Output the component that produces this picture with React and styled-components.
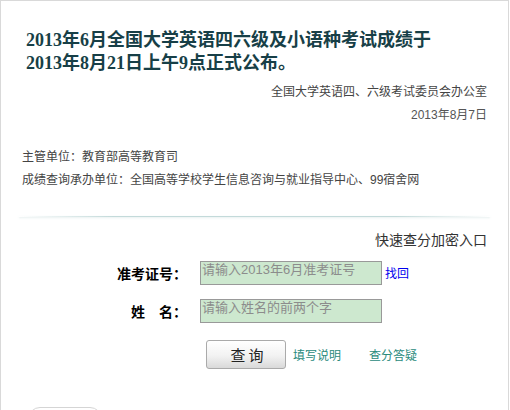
import styled, { createGlobalStyle } from 'styled-components';

const GlobalStyle = createGlobalStyle`
	html, body {
		margin: 0;
		padding: 0;
		background: #fff;
	}

	body {
		font-family: 'Liberation Sans', 'Noto Sans CJK SC', sans-serif;
	}
`;

const Page = styled.div`
	box-sizing: border-box;
	width: 509px;
	height: 410px;
	border: 1px solid #d9d9d9;
	border-bottom: none;
	overflow: hidden;
`;

const Header = styled.div`
	padding: 28px 21px 0 25px;
`;

const Title = styled.h1`
	margin: 0;
	font-family: 'Liberation Serif', 'Noto Sans CJK SC', serif;
	font-size: 18px;
	font-weight: bold;
	line-height: 23px;
	color: #173f47;
`;

const TitleLine = styled.div`
	height: 23px;
`;

const Signature = styled.div`
	height: 23px;
	margin-top: ${({ $first }) => ($first ? '6px' : '0')};
	text-align: right;
	font-size: 12px;
	line-height: 23px;
	color: ${({ $first }) => ($first ? '#444' : '#555')};
`;

const Info = styled.div`
	padding: 19px 0 0 21px;
	font-size: 12px;
	line-height: 23px;
	color: #444;
`;

const InfoLine = styled.div`
	height: 23px;
`;

const Divider = styled.div`
	height: 1px;
	margin: 24px 18px 0 18px;
	background: linear-gradient(
		to right,
		rgba(190, 215, 215, 0),
		#c3dada 20%,
		#c3dada 80%,
		rgba(190, 215, 215, 0)
	);
	box-shadow: 0 1px 2px rgba(200, 220, 220, 0.6);
`;

const QuickEntry = styled.div`
	height: 20px;
	margin: 13px 21px 0 0;
	text-align: right;
	font-size: 14px;
	line-height: 20px;
	color: #333;
`;

const Form = styled.div`
	display: flex;
	flex-direction: column;
	gap: 14px;
	margin-top: 11px;
`;

const Row = styled.div`
	display: flex;
	align-items: center;
	height: 24px;
`;

const Label = styled.label`
	box-sizing: border-box;
	width: 186px;
	text-align: right;
	font-size: 14px;
	font-weight: bold;
	color: #000;
	white-space: pre;
`;

const Field = styled.input`
	box-sizing: border-box;
	width: 182px;
	height: 24px;
	margin-left: 13px;
	padding: 0 0 7px 1px;
	border: 1px solid #999;
	background: #cde8cf;
	font-family: 'Liberation Sans', 'Noto Sans CJK SC', sans-serif;
	font-size: 13px;
	outline: none;

	&::placeholder {
		color: #8c8c8c;
	}
`;

const Recover = styled.a`
	margin: 0 0 2px 3px;
	font-size: 12px;
	color: #0000ee;
	text-decoration: none;
`;

const Actions = styled.div`
	display: flex;
	align-items: center;
	height: 29px;
	margin: 17px 0 0 205px;
`;

const QueryButton = styled.button`
	box-sizing: border-box;
	width: 80px;
	height: 29px;
	padding: 0 0 0 5px;
	border: 1px solid #aaa;
	border-radius: 3px;
	background: linear-gradient(to bottom, #ffffff 0%, #f2f2f2 55%, #d9d9d9 100%);
	font-family: 'Noto Sans CJK SC', sans-serif;
	font-size: 15px;
	letter-spacing: 3px;
	color: #222;
	cursor: pointer;
`;

const HelpLink = styled.a`
	margin-left: ${({ $wide }) => ($wide ? '28px' : '7px')};
	font-size: 12px;
	color: #2a8a7c;
	text-decoration: none;
`;

const Bottom = styled.div`
	width: 72px;
	height: 30px;
	margin: 38px 0 0 27px;
	border: 1px solid #d5d5d5;
	border-radius: 12px;
	background: #fff;
`;

export default function App() {
	return (
		<>
			<GlobalStyle />
			<Page>
				<Header>
					<Title>
						<TitleLine>2013年6月全国大学英语四六级及小语种考试成绩于</TitleLine>
						<TitleLine>2013年8月21日上午9点正式公布。</TitleLine>
					</Title>
					<Signature $first>全国大学英语四、六级考试委员会办公室</Signature>
					<Signature>2013年8月7日</Signature>
				</Header>
				<Info>
					<InfoLine>主管单位：教育部高等教育司</InfoLine>
					<InfoLine>成绩查询承办单位：全国高等学校学生信息咨询与就业指导中心、99宿舍网</InfoLine>
				</Info>
				<Divider />
				<QuickEntry>快速查分加密入口</QuickEntry>
				<Form>
					<Row>
						<Label>准考证号：</Label>
						<Field placeholder="请输入2013年6月准考证号" />
						<Recover href="#">找回</Recover>
					</Row>
					<Row>
						<Label>姓　名：</Label>
						<Field placeholder="请输入姓名的前两个字" />
					</Row>
				</Form>
				<Actions>
					<QueryButton>查询</QueryButton>
					<HelpLink href="#">填写说明</HelpLink>
					<HelpLink href="#" $wide>
						查分答疑
					</HelpLink>
				</Actions>
				<Bottom />
			</Page>
		</>
	);
}
